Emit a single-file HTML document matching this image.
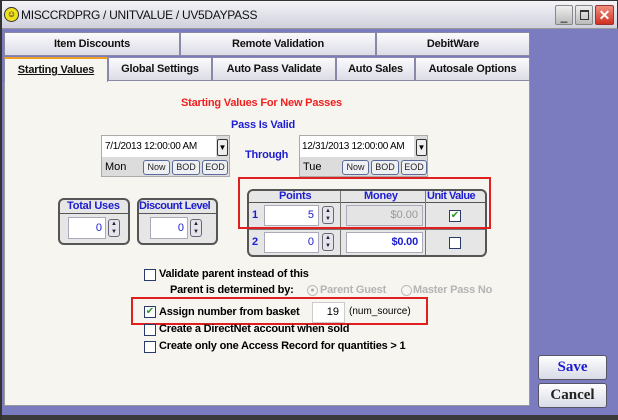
<!DOCTYPE html>
<html><head><meta charset="utf-8"><style>
*{box-sizing:border-box;margin:0;padding:0}
body{width:618px;height:420px;overflow:hidden;background:#7b7bbf;font-family:"Liberation Sans",Arial,sans-serif;position:relative}
.a{position:absolute;white-space:nowrap}
.title{left:0;top:0;width:618px;height:29px;background:linear-gradient(#f4f4f8,#d0d0dc);border:1px solid #333;border-bottom:1px solid #999}
.tab{position:absolute;height:24px;background:linear-gradient(#fbfbfd,#dcdce6);border:1px solid #8888a8;font-weight:bold;font-size:11px;text-align:center;line-height:22px;color:#111;letter-spacing:-0.2px}
.panel{left:4px;top:80px;width:526px;height:326px;background:#f6f5f0;border:1px solid #999}
.b{font-weight:bold;font-size:11px;letter-spacing:-0.2px}
.blue{color:#1c1cd0}
.cb{position:absolute;width:12px;height:12px;border:1px solid #2a3a6a;background:#fff}
.btn{position:absolute;height:15px;border:1px solid #5a6a9a;border-radius:3px;background:#eef0f4;font-size:9px;text-align:center;line-height:13px;color:#222}
.inp{position:absolute;background:#fff;border:1px solid #aab;font-size:11px;text-align:right}
.spin{position:absolute;width:12px;height:18px;border:1px solid #667;border-radius:3px;background:#e4e4ea;font-size:6px;line-height:8px;text-align:center;color:#223}
.box{position:absolute;border:2px solid #555;border-radius:6px;background:#e6e6e6}
.red{position:absolute;border:2px solid #e02020}
.sb{position:absolute;left:538px;width:69px;height:25px;border:1px solid #556;border-radius:3px;background:linear-gradient(#fff,#d8dae6);font-family:"Liberation Serif",serif;font-weight:bold;font-size:15px;text-align:center;line-height:23px}
.sm{font-size:10px;letter-spacing:-0.3px}
</style></head><body>
<div class="a title"></div>
<div class="a" style="left:4px;top:7px;width:15px;height:15px;border-radius:50%;background:#f0e020;border:1px solid #333;font-size:9px;line-height:13px;text-align:center">☺</div>
<div class="a" style="left:21px;top:8px;font-size:12px;color:#111;letter-spacing:-0.3px">MISCCRDPRG / UNITVALUE / UV5DAYPASS</div>
<div class="a" style="left:555px;top:5px;width:18px;height:20px;background:linear-gradient(#eee,#bbb);border:1px solid #888;border-radius:2px;font-size:12px;text-align:center;line-height:20px">_</div>
<div class="a" style="left:575px;top:5px;width:18px;height:20px;background:linear-gradient(#eee,#bbb);border:1px solid #888;border-radius:2px"><div class="a" style="left:4px;top:4px;width:9px;height:10px;border:1px solid #333;border-top-width:2px"></div></div>
<div class="a" style="left:595px;top:5px;width:19px;height:20px;background:linear-gradient(#f09080,#d03020);border:1px solid #933;border-radius:2px;color:#fff;font-weight:bold;font-size:14px;text-align:center;line-height:19px">✕</div>

<div class="tab" style="left:4px;top:32px;width:176px">Item Discounts</div>
<div class="tab" style="left:180px;top:32px;width:196px">Remote Validation</div>
<div class="tab" style="left:376px;top:32px;width:154px">DebitWare</div>
<div class="a panel"></div>
<div class="tab" style="left:4px;top:57px;width:104px;background:#f6f5f0;border-top:2px solid #f0a020;border-bottom:none;height:25px"><u>Starting Values</u></div>
<div class="tab" style="left:108px;top:57px;width:104px">Global Settings</div>
<div class="tab" style="left:212px;top:57px;width:124px">Auto Pass Validate</div>
<div class="tab" style="left:336px;top:57px;width:79px">Auto Sales</div>
<div class="tab" style="left:415px;top:57px;width:115px">Autosale Options</div>

<div class="a b" style="left:181px;top:97px;color:#f02020">Starting Values For New Passes</div>
<div class="a b blue" style="left:231px;top:119px">Pass Is Valid</div>

<div class="a" style="left:101px;top:135px;width:129px;height:42px;background:#dcdcdc;border:1px solid #aaa"></div>
<div class="a" style="left:102px;top:136px;width:114px;height:21px;background:#fff"></div>
<div class="a sm" style="left:105px;top:141px">7/1/2013 12:00:00 AM</div>
<div class="a" style="left:217px;top:139px;width:11px;height:17px;border:1px solid #333;border-radius:2px;background:#eee;font-size:8px;text-align:center;line-height:15px">▼</div>
<div class="a" style="left:105px;top:161px;font-size:11px">Mon</div>
<div class="btn" style="left:143px;top:160px;width:27px">Now</div>
<div class="btn" style="left:172px;top:160px;width:28px">BOD</div>
<div class="btn" style="left:202px;top:160px;width:26px">EOD</div>
<div class="a b blue" style="left:245px;top:149px">Through</div>
<div class="a" style="left:299px;top:135px;width:129px;height:42px;background:#dcdcdc;border:1px solid #aaa"></div>
<div class="a" style="left:300px;top:136px;width:114px;height:21px;background:#fff"></div>
<div class="a sm" style="left:302px;top:141px">12/31/2013 12:00:00 AM</div>
<div class="a" style="left:416px;top:139px;width:11px;height:17px;border:1px solid #333;border-radius:2px;background:#eee;font-size:8px;text-align:center;line-height:15px">▼</div>
<div class="a" style="left:303px;top:161px;font-size:11px">Tue</div>
<div class="btn" style="left:342px;top:160px;width:27px">Now</div>
<div class="btn" style="left:371px;top:160px;width:28px">BOD</div>
<div class="btn" style="left:401px;top:160px;width:26px">EOD</div>

<div class="box" style="left:58px;top:198px;width:72px;height:47px"></div>
<div class="a b blue" style="left:67px;top:200px">Total Uses</div>
<div class="a" style="left:60px;top:213px;width:68px;height:1px;background:#555"></div>
<div class="inp blue" style="left:68px;top:217px;width:38px;height:22px;line-height:20px;padding-right:3px">0</div>
<div class="spin" style="left:108px;top:219px">▲<br>▼</div>
<div class="box" style="left:137px;top:198px;width:81px;height:47px"></div>
<div class="a b blue" style="left:139px;top:200px;letter-spacing:-0.5px">Discount Level</div>
<div class="a" style="left:139px;top:213px;width:77px;height:1px;background:#555"></div>
<div class="inp blue" style="left:150px;top:217px;width:38px;height:22px;line-height:20px;padding-right:3px">0</div>
<div class="spin" style="left:190px;top:219px">▲<br>▼</div>

<div class="box" style="left:247px;top:189px;width:240px;height:68px"></div>
<div class="a" style="left:249px;top:202px;width:236px;height:1px;background:#555"></div>
<div class="a" style="left:249px;top:229px;width:236px;height:1px;background:#777"></div>
<div class="a" style="left:340px;top:191px;width:1px;height:64px;background:#777"></div>
<div class="a" style="left:425px;top:191px;width:1px;height:64px;background:#777"></div>
<div class="a b blue" style="left:279px;top:190px">Points</div>
<div class="a b blue" style="left:364px;top:190px">Money</div>
<div class="a b blue" style="left:427px;top:190px;letter-spacing:-0.5px">Unit Value</div>
<div class="a b blue" style="left:252px;top:209px">1</div>
<div class="a b blue" style="left:252px;top:236px">2</div>
<div class="inp blue" style="left:264px;top:205px;width:55px;height:21px;line-height:19px;padding-right:4px">5</div>
<div class="spin" style="left:322px;top:206px">▲<br>▼</div>
<div class="inp" style="left:264px;top:232px;width:55px;height:21px;line-height:19px;padding-right:4px;color:#1c1cd0">0</div>
<div class="spin" style="left:322px;top:233px">▲<br>▼</div>
<div class="inp" style="left:346px;top:205px;width:77px;height:21px;line-height:19px;padding-right:4px;background:#e4e4e4;color:#999">$0.00</div>
<div class="inp b blue" style="left:346px;top:232px;width:77px;height:21px;line-height:19px;padding-right:4px">$0.00</div>
<div class="cb" style="left:449px;top:210px;color:#2a9a2a;font-size:10px;line-height:10px;text-align:center">✔</div>
<div class="cb" style="left:449px;top:237px"></div>
<div class="red" style="left:238px;top:177px;width:253px;height:52px"></div>

<div class="cb" style="left:144px;top:269px"></div>
<div class="a b" style="left:159px;top:268px">Validate parent instead of this</div>
<div class="a b" style="left:170px;top:284px">Parent is determined by:</div>
<div class="a" style="left:307px;top:285px;width:11px;height:11px;border-radius:50%;border:1px solid #bbb;font-size:7px;color:#aaa;text-align:center;line-height:9px">●</div>
<div class="a b" style="left:320px;top:284px;color:#b4b4b4">Parent Guest</div>
<div class="a" style="left:401px;top:285px;width:11px;height:11px;border-radius:50%;border:1px solid #bbb"></div>
<div class="a b" style="left:413px;top:284px;color:#b4b4b4">Master Pass No</div>

<div class="red" style="left:131px;top:297px;width:297px;height:28px"></div>
<div class="cb" style="left:144px;top:306px;color:#2a9a2a;font-size:10px;line-height:10px;text-align:center">✔</div>
<div class="a b" style="left:159px;top:306px">Assign number from basket</div>
<div class="inp" style="left:312px;top:302px;width:33px;height:21px;line-height:19px;padding-right:5px;border-color:#ccc">19</div>
<div class="a" style="left:349px;top:306px;font-size:10px">(num_source)</div>
<div class="cb" style="left:144px;top:324px"></div>
<div class="a b" style="left:159px;top:323px">Create a DirectNet account when sold</div>
<div class="cb" style="left:144px;top:341px"></div>
<div class="a b" style="left:159px;top:340px">Create only one Access Record for quantities &gt; 1</div>

<div class="sb" style="top:355px;color:#1c1ccc">Save</div>
<div class="sb" style="top:383px;color:#222">Cancel</div>
<div class="a" style="left:0;top:415px;width:618px;height:5px;background:#3a3a3a"></div>
<div class="a" style="left:0;top:0;width:2px;height:420px;background:#333"></div>
</body></html>
